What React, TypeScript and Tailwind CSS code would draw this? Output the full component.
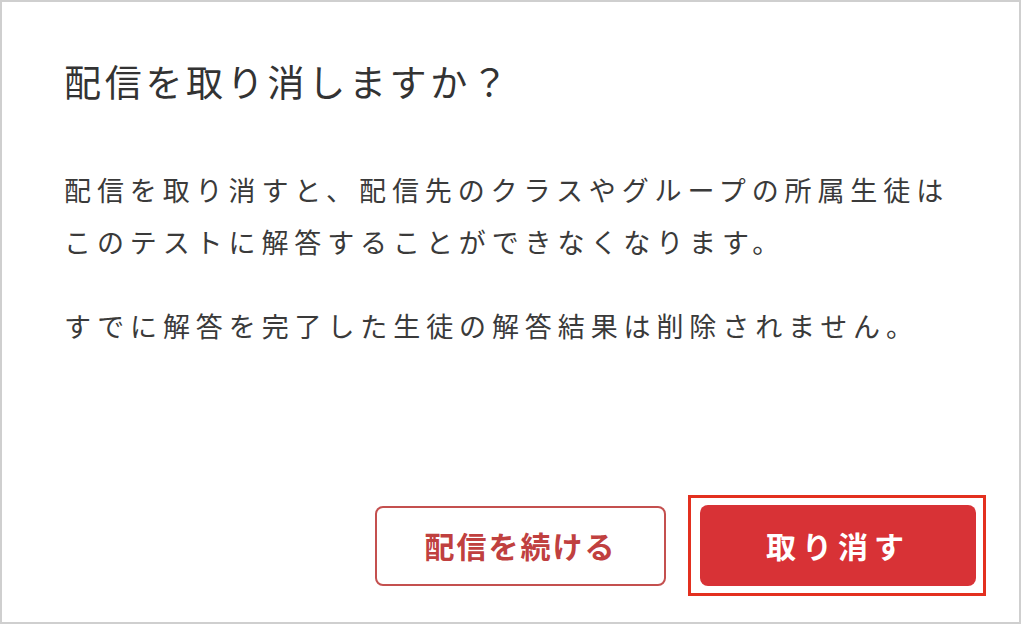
const jp = { fontFamily: '"Noto Sans CJK JP", "Noto Sans", sans-serif' };

export default function App() {
  return (
    <div className="w-[1024px] h-[626px] bg-white" style={jp}>
      <div className="w-[1021px] h-[624px] border-2 border-[#cfcfcf] flex flex-col">
        {/* Title */}
        <div className="px-[62px] pt-[56px]">
          <h1 className="text-[37px] leading-[46px] font-normal text-[#333333] tracking-[3.7px]">
            配信を取り消しますか？
          </h1>

          {/* Body */}
          <div className="mt-[60px] text-[27px] leading-[52px] text-[#3a3a3a] tracking-[5.9px]">
            <p>
              配信を取り消すと、配信先のクラスやグループの所属生徒は
              <br />
              このテストに解答することができなくなります。
            </p>
            <p className="mt-[32px]">すでに解答を完了した生徒の解答結果は削除されません。</p>
          </div>
        </div>

        {/* Actions */}
        <div className="mt-auto flex items-center justify-end gap-[22px] pr-[33px] pb-[26px]">
          <button className="w-[291px] h-[80px] rounded-[8px] border-2 border-[#c4504f] bg-white text-[#c0403f] text-[30px] font-bold tracking-[2px] flex items-center justify-center">
            配信を続ける
          </button>
          <div className="border-[3px] border-[#e3301f] pl-[9px] pr-[7px] py-[7px]">
            <button className="w-[276px] h-[81px] rounded-[8px] bg-[#d83236] text-white text-[30px] font-bold tracking-[6px] flex items-center justify-center">
              取り消す
            </button>
          </div>
        </div>
      </div>
    </div>
  );
}
